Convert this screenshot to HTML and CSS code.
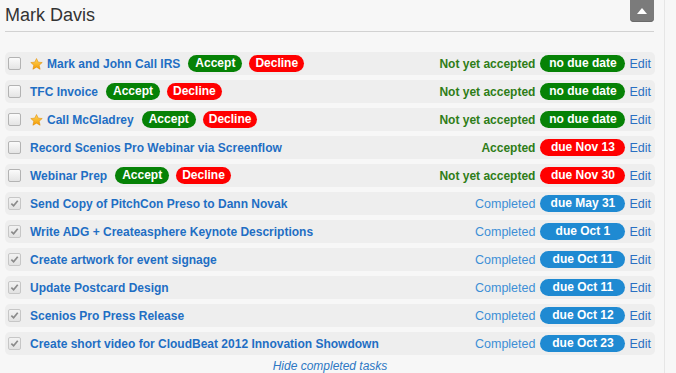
FILE: index.html
```html
<!DOCTYPE html>
<html>
<head>
<meta charset="utf-8">
<link rel="stylesheet" href="styles.css">
</head>
<body>
<div class="rail"></div>
<div class="panel">
  <div class="header">
    <h1 class="name">Mark Davis</h1>
    <button class="collapse" aria-label="Collapse"><span class="tri"></span></button>
  </div>
  <ul class="tasks">
    <li class="task">
      <span class="cb"></span>
      <svg class="star" viewBox="0 0 14 13" width="13" height="12"><defs><linearGradient id="g1" x1="0" y1="0" x2="0" y2="1"><stop offset="0" stop-color="#ffd75a"/><stop offset="1" stop-color="#f39a00"/></linearGradient></defs><path d="M7 0.6 L8.9 4.5 L13.2 4.9 L9.9 7.8 L10.9 12.2 L7 9.9 L3.1 12.2 L4.1 7.8 L0.8 4.9 L5.1 4.5 Z" fill="url(#g1)" stroke="#e08a00" stroke-width="0.6"/></svg>
      <a class="title">Mark and John Call IRS</a>
      <span class="btn accept">Accept</span><span class="btn decline">Decline</span>
      <span class="meta"><span class="status pending">Not yet accepted</span><span class="due green">no due date</span><a class="edit">Edit</a></span>
    </li>
    <li class="task">
      <span class="cb"></span>
      <a class="title">TFC Invoice</a>
      <span class="btn accept">Accept</span><span class="btn decline">Decline</span>
      <span class="meta"><span class="status pending">Not yet accepted</span><span class="due green">no due date</span><a class="edit">Edit</a></span>
    </li>
    <li class="task">
      <span class="cb"></span>
      <svg class="star" viewBox="0 0 14 13" width="13" height="12"><defs><linearGradient id="g2" x1="0" y1="0" x2="0" y2="1"><stop offset="0" stop-color="#ffd75a"/><stop offset="1" stop-color="#f39a00"/></linearGradient></defs><path d="M7 0.6 L8.9 4.5 L13.2 4.9 L9.9 7.8 L10.9 12.2 L7 9.9 L3.1 12.2 L4.1 7.8 L0.8 4.9 L5.1 4.5 Z" fill="url(#g2)" stroke="#e08a00" stroke-width="0.6"/></svg>
      <a class="title">Call McGladrey</a>
      <span class="btn accept">Accept</span><span class="btn decline">Decline</span>
      <span class="meta"><span class="status pending">Not yet accepted</span><span class="due green">no due date</span><a class="edit">Edit</a></span>
    </li>
    <li class="task">
      <span class="cb"></span>
      <a class="title">Record Scenios Pro Webinar via Screenflow</a>
      <span class="meta"><span class="status pending">Accepted</span><span class="due red">due Nov 13</span><a class="edit">Edit</a></span>
    </li>
    <li class="task">
      <span class="cb"></span>
      <a class="title">Webinar Prep</a>
      <span class="btn accept">Accept</span><span class="btn decline">Decline</span>
      <span class="meta"><span class="status pending">Not yet accepted</span><span class="due red">due Nov 30</span><a class="edit">Edit</a></span>
    </li>
    <li class="task">
      <span class="cb done"><svg viewBox="0 0 10 10" width="9" height="9"><path d="M1.5 5.2 L4 7.6 L8.6 2" fill="none" stroke="#8a8a8a" stroke-width="1.9"/></svg></span>
      <a class="title">Send Copy of PitchCon Preso to Dann Novak</a>
      <span class="meta"><span class="status completed">Completed</span><span class="due blue">due May 31</span><a class="edit">Edit</a></span>
    </li>
    <li class="task">
      <span class="cb done"><svg viewBox="0 0 10 10" width="9" height="9"><path d="M1.5 5.2 L4 7.6 L8.6 2" fill="none" stroke="#8a8a8a" stroke-width="1.9"/></svg></span>
      <a class="title">Write ADG + Createasphere Keynote Descriptions</a>
      <span class="meta"><span class="status completed">Completed</span><span class="due blue">due Oct 1</span><a class="edit">Edit</a></span>
    </li>
    <li class="task">
      <span class="cb done"><svg viewBox="0 0 10 10" width="9" height="9"><path d="M1.5 5.2 L4 7.6 L8.6 2" fill="none" stroke="#8a8a8a" stroke-width="1.9"/></svg></span>
      <a class="title">Create artwork for event signage</a>
      <span class="meta"><span class="status completed">Completed</span><span class="due blue">due Oct 11</span><a class="edit">Edit</a></span>
    </li>
    <li class="task">
      <span class="cb done"><svg viewBox="0 0 10 10" width="9" height="9"><path d="M1.5 5.2 L4 7.6 L8.6 2" fill="none" stroke="#8a8a8a" stroke-width="1.9"/></svg></span>
      <a class="title">Update Postcard Design</a>
      <span class="meta"><span class="status completed">Completed</span><span class="due blue">due Oct 11</span><a class="edit">Edit</a></span>
    </li>
    <li class="task">
      <span class="cb done"><svg viewBox="0 0 10 10" width="9" height="9"><path d="M1.5 5.2 L4 7.6 L8.6 2" fill="none" stroke="#8a8a8a" stroke-width="1.9"/></svg></span>
      <a class="title">Scenios Pro Press Release</a>
      <span class="meta"><span class="status completed">Completed</span><span class="due blue">due Oct 12</span><a class="edit">Edit</a></span>
    </li>
    <li class="task">
      <span class="cb done"><svg viewBox="0 0 10 10" width="9" height="9"><path d="M1.5 5.2 L4 7.6 L8.6 2" fill="none" stroke="#8a8a8a" stroke-width="1.9"/></svg></span>
      <a class="title">Create short video for CloudBeat 2012 Innovation Showdown</a>
      <span class="meta"><span class="status completed">Completed</span><span class="due blue">due Oct 23</span><a class="edit">Edit</a></span>
    </li>
  </ul>
  <div class="footer"><a class="hide">Hide completed tasks</a></div>
</div>
</body>
</html>
```

FILE: styles.css
```css
html, body {
  margin: 0;
  padding: 0;
  background: #f7f7f7;
  font-family: "Liberation Sans", Arial, sans-serif;
  height: 100%;
  overflow: hidden;
}

.panel {
  width: 650px;
  margin-left: 5px;
}

.header {
  display: flex;
  align-items: flex-start;
  justify-content: space-between;
  height: 31px;
  border-bottom: 1px solid #d2d2d2;
  margin-right: 1px;
}

.name {
  margin: 4px 0 0 0;
  font-size: 18px;
  line-height: 22px;
  font-weight: normal;
  color: #333333;
}

.collapse {
  width: 24px;
  height: 22px;
  padding: 0;
  border: none;
  background: #7b7b7b;
  border-radius: 0 0 4px 4px;
  display: flex;
  align-items: center;
  justify-content: center;
  box-shadow: inset 0 -1px 0 #6a6a6a;
}

.tri {
  width: 0;
  height: 0;
  border-left: 5px solid transparent;
  border-right: 5px solid transparent;
  border-bottom: 6px solid #ffffff;
  margin-top: -1px;
}

.tasks {
  list-style: none;
  margin: 20px 0 0 0;
  padding: 0;
}

.task {
  display: flex;
  align-items: center;
  height: 23px;
  margin-bottom: 5px;
  padding: 0 4px 0 3px;
  background: #eeeeee;
  border-radius: 5px;
  font-size: 12px;
}

.task:last-child {
  margin-bottom: 3px;
}

.cb {
  width: 11px;
  height: 11px;
  border: 1px solid #b3b3b3;
  border-radius: 2px;
  background: linear-gradient(#fbfbfb, #e4e4e4);
  margin-right: 9px;
  display: flex;
  align-items: center;
  justify-content: center;
  flex: none;
}

.cb.done {
  border-color: #c6c6c6;
  background: linear-gradient(#f2f2f2, #e2e2e2);
}

.star {
  margin-right: 4px;
  flex: none;
}

.title {
  font-weight: bold;
  color: #1f6ec4;
  white-space: nowrap;
}

.btn {
  height: 17px;
  line-height: 17px;
  border-radius: 9px;
  color: #ffffff;
  font-weight: bold;
  font-size: 12px;
  padding: 0 7px;
}

.accept {
  background: #068206;
  margin-left: 8px;
}

.decline {
  background: #ff0000;
  margin-left: 7px;
  padding: 0 6px;
}

.meta {
  margin-left: auto;
  display: flex;
  align-items: center;
}

.status.pending {
  font-weight: bold;
  color: #2f7d18;
}

.status.completed {
  font-size: 12.5px;
  color: #3d8ed6;
}

.due {
  width: 85px;
  height: 17px;
  line-height: 17px;
  border-radius: 9px;
  text-align: center;
  color: #ffffff;
  font-weight: bold;
  margin-left: 5px;
}

.due.green { background: #068206; }
.due.red { background: #ff0000; }
.due.blue { background: #1f8ad2; }

.edit {
  margin-left: 4px;
  color: #2a70c2;
  font-size: 12.5px;
}

.footer {
  text-align: center;
  line-height: 14px;
}

.hide {
  font-style: italic;
  font-size: 12px;
  color: #2d78c4;
}

.rail {
  position: absolute;
  top: 0;
  left: 664px;
  width: 1px;
  height: 100%;
  background: #e6e6e6;
}
```
